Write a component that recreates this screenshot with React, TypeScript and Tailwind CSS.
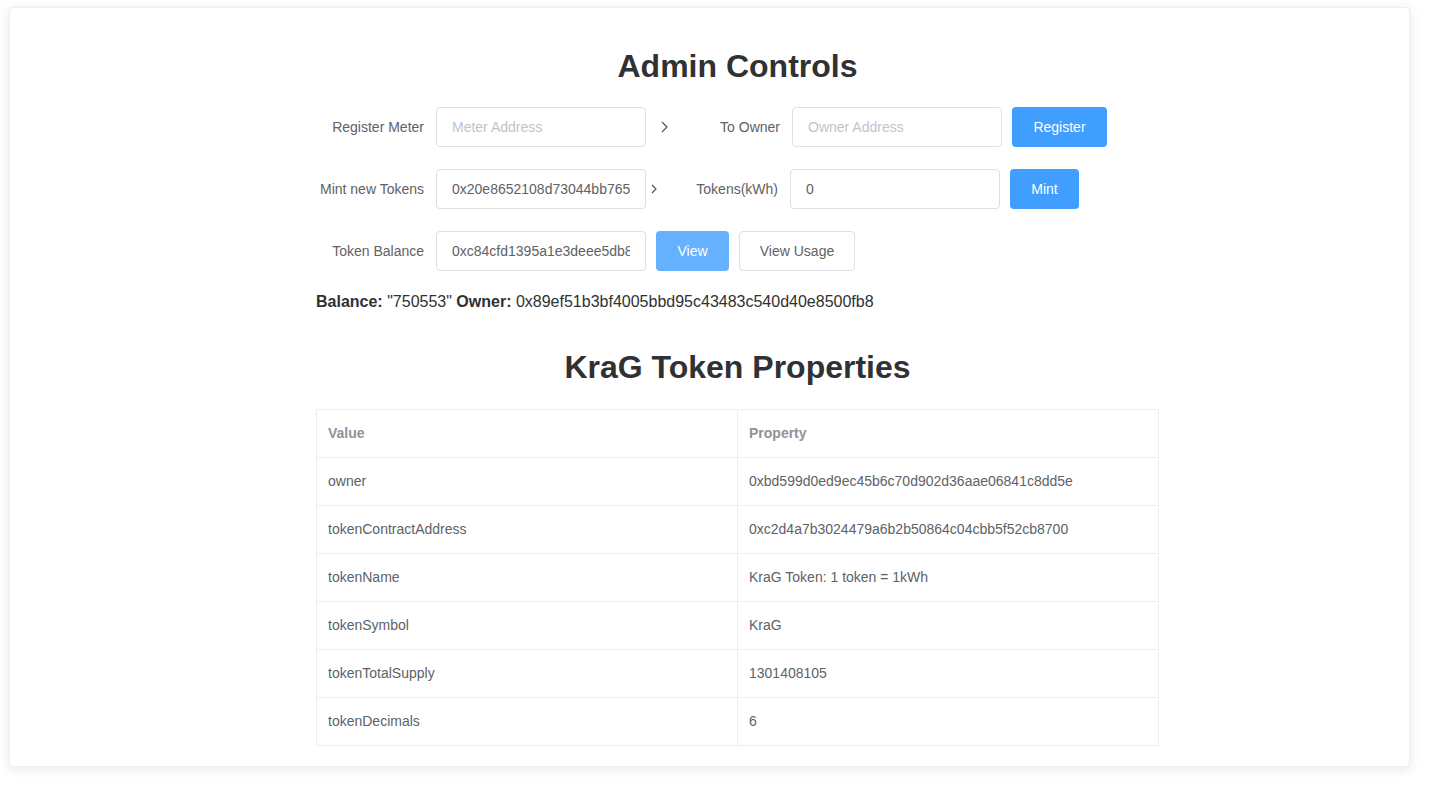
import React from "react";

const Chevron = ({ w, h }: { w: number; h: number }) => (
  <svg width={w} height={h} viewBox={`0 0 ${w} ${h}`} fill="none">
    <polyline points={`1,1 ${w - 1},${h / 2} 1,${h - 1}`} stroke="#4a4d55" strokeWidth="1.1" />
  </svg>
);

const rows: [string, string][] = [
  ["owner", "0xbd599d0ed9ec45b6c70d902d36aae06841c8dd5e"],
  ["tokenContractAddress", "0xc2d4a7b3024479a6b2b50864c04cbb5f52cb8700"],
  ["tokenName", "KraG Token: 1 token = 1kWh"],
  ["tokenSymbol", "KraG"],
  ["tokenTotalSupply", "1301408105"],
  ["tokenDecimals", "6"],
];

const inputCls =
  "h-[40px] w-[210px] rounded-[4px] border border-[#DCDFE6] bg-white px-[15px] text-[14px] text-[#606266] placeholder:text-[#C0C4CC] outline-none";

export default function App() {
  return (
    <div
      className="min-h-screen bg-white pt-[7px] pl-[9px] pr-[35px] pb-[20px] text-[#303133]"
      style={{ fontFamily: '"Liberation Sans", Arial, sans-serif' }}
    >
      <div className="w-[1401px] rounded-[4px] border border-[#EBEEF5] bg-white px-[20px] pb-[20px] pt-[20px] shadow-[0_2px_12px_0_rgba(0,0,0,0.1)]">
        <div className="ml-[286px] w-[843px]">
          <h1 className="mt-[20px] mb-[22px] text-center text-[32px] font-bold leading-[37px] text-[#303133]">
            Admin Controls
          </h1>

          {/* Row 1 */}
          <div className="flex items-center">
            <label className="w-[120px] pr-[12px] text-right text-[14px] text-[#606266]">Register Meter</label>
            <input className={inputCls} placeholder="Meter Address" />
            <div className="ml-[15px] flex w-[9px] items-center">
              <Chevron w={7} h={12} />
            </div>
            <label className="w-[122px] pr-[12px] text-right text-[14px] text-[#606266]">To Owner</label>
            <input className={inputCls} placeholder="Owner Address" />
            <button className="ml-[10px] h-[40px] w-[95px] rounded-[4px] bg-[#409EFF] text-[14px] text-white">
              Register
            </button>
          </div>

          {/* Row 2 */}
          <div className="mt-[22px] flex items-center">
            <label className="w-[120px] pr-[12px] text-right text-[14px] text-[#606266]">Mint new Tokens</label>
            <input className={inputCls} defaultValue="0x20e8652108d73044bb765" />
            <div className="ml-[5px] flex w-[7px] items-center">
              <Chevron w={6} h={10} />
            </div>
            <label className="w-[132px] pr-[12px] text-right text-[14px] text-[#606266]">Tokens(kWh)</label>
            <input className={inputCls} defaultValue="0" />
            <button className="ml-[10px] h-[40px] w-[69px] rounded-[4px] bg-[#409EFF] text-[14px] text-white">
              Mint
            </button>
          </div>

          {/* Row 3 */}
          <div className="mt-[22px] flex items-center">
            <label className="w-[120px] pr-[12px] text-right text-[14px] text-[#606266]">Token Balance</label>
            <input className={inputCls} defaultValue="0xc84cfd1395a1e3deee5db8c2" />
            <button className="ml-[10px] h-[40px] w-[73px] rounded-[4px] bg-[#66b1ff] text-[14px] text-white">
              View
            </button>
            <button className="ml-[10px] h-[40px] w-[116px] rounded-[4px] border border-[#DCDFE6] bg-white text-[14px] text-[#606266]">
              View Usage
            </button>
          </div>

          <div className="mt-[22px] h-[18px] text-[16px] leading-[18px] text-[#303133]">
            <b>Balance:</b> "750553" <b>Owner:</b> 0x89ef51b3bf4005bbd95c43483c540d40e8500fb8
          </div>

          <h1 className="mt-[38px] mb-[23px] text-center text-[32px] font-bold leading-[37px] text-[#303133]">
            KraG Token Properties
          </h1>

          <table className="w-[843px] table-fixed border-collapse border border-[#EBEEF5] text-[14px]">
            <thead>
              <tr className="h-[48px]">
                <th className="border border-[#EBEEF5] pl-[11px] text-left font-bold text-[#909399]">Value</th>
                <th className="border border-[#EBEEF5] pl-[11px] text-left font-bold text-[#909399]">Property</th>
              </tr>
            </thead>
            <tbody>
              {rows.map(([k, v]) => (
                <tr key={k} className="h-[48px]">
                  <td className="border border-[#EBEEF5] pl-[11px] text-[#606266]">{k}</td>
                  <td className="border border-[#EBEEF5] pl-[11px] text-[#606266]">{v}</td>
                </tr>
              ))}
            </tbody>
          </table>
        </div>
      </div>
    </div>
  );
}
